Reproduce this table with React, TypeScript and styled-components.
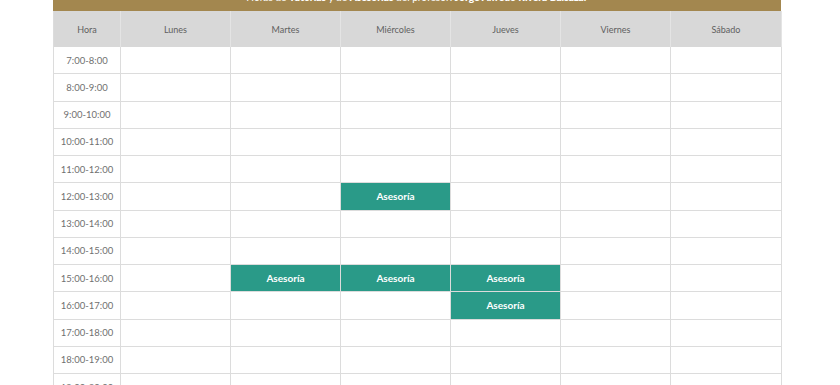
import styled, { createGlobalStyle } from "styled-components";

const GlobalStyle = createGlobalStyle`
  html, body {
    margin: 0;
    padding: 0;
    background: #ffffff;
    overflow: hidden;
  }
  body {
    font-family: Lato, "Noto Sans", "Liberation Sans", sans-serif;
  }
`;

const days = ["Lunes", "Martes", "Miércoles", "Jueves", "Viernes", "Sábado"];

const hours = [
  "7:00-8:00",
  "8:00-9:00",
  "9:00-10:00",
  "10:00-11:00",
  "11:00-12:00",
  "12:00-13:00",
  "13:00-14:00",
  "14:00-15:00",
  "15:00-16:00",
  "16:00-17:00",
  "17:00-18:00",
  "18:00-19:00",
  "19:00-20:00",
];

// hora -> índices de día con asesoría
const sessions: Record<string, number[]> = {
  "12:00-13:00": [2],
  "15:00-16:00": [1, 2, 3],
  "16:00-17:00": [3],
};

export default function App() {
  return (
    <>
      <GlobalStyle />
      <Page>
        <Wrapper>
          <Banner>
            Horas de <b>Tutorías</b> y de <b>Asesorías</b> del profesor:{" "}
            <b>Jorge Alfredo Rivera Balsazar</b>
          </Banner>
          <Schedule>
            <HeadCell>Hora</HeadCell>
            {days.map((d) => (
              <HeadCell key={d}>{d}</HeadCell>
            ))}
            {hours.map((h) => (
              <Row key={h}>
                <TimeCell>{h}</TimeCell>
                {days.map((d, i) => {
                  const busy = (sessions[h] || []).includes(i);
                  return (
                    <Cell key={d} $busy={busy}>
                      {busy ? "Asesoría" : ""}
                    </Cell>
                  );
                })}
              </Row>
            ))}
          </Schedule>
        </Wrapper>
      </Page>
    </>
  );
}

const Page = styled.div`
  width: 840px;
  height: 385px;
  overflow: hidden;
`;

const Wrapper = styled.div`
  width: 728px;
  margin: -20px 0 0 53px;
`;

const Banner = styled.div`
  background: #a3874f;
  color: #ffffff;
  font-size: 10.2px;
  line-height: 14px;
  text-align: center;
  padding: 10px 0 7px;

  b {
    font-weight: 900;
  }
`;

const Schedule = styled.div`
  display: grid;
  grid-template-columns: 67px repeat(5, 110px) 111px;
  grid-template-rows: 36px;
  grid-auto-rows: 27.25px;
  border-left: 1px solid #dcdcdc;
  color: #5f5f5f;
`;

const Row = styled.div`
  display: contents;
`;

const HeadCell = styled.div`
  background: #d8d8d8;
  border-right: 1px solid #e4e4e4;
  display: flex;
  align-items: center;
  justify-content: center;
  font-size: 9px;
  color: #606060;
`;

const TimeCell = styled.div`
  border-right: 1px solid #dcdcdc;
  border-bottom: 1px solid #dcdcdc;
  display: flex;
  align-items: center;
  justify-content: center;
  font-size: 9.5px;
  color: #707070;
`;

const Cell = styled.div<{ $busy: boolean }>`
  border-right: 1px solid #dcdcdc;
  border-bottom: 1px solid #dcdcdc;
  background: ${(p) => (p.$busy ? "#2a9a88" : "#ffffff")};
  color: #ffffff;
  font-size: 10px;
  font-weight: 700;
  display: flex;
  align-items: center;
  justify-content: center;
`;
